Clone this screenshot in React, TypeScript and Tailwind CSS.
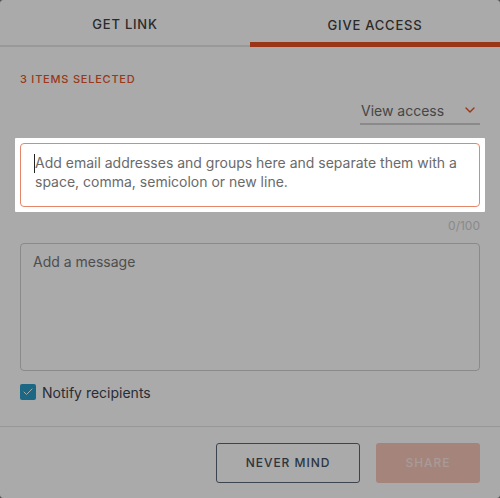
import { Check, ChevronDown } from 'lucide-react';

export default function App() {
  return (
    <div className="h-[498px] w-[500px] overflow-hidden bg-[#555] font-['Inter',sans-serif]">
      <div className="relative flex h-full flex-col overflow-hidden rounded-[4px] bg-white">
        {/* tabs */}
        <div className="flex h-[47px] border-b-2 border-[#e6e6e6]">
          <button className="flex-1 pt-[4px] text-[13px] font-medium tracking-[0.06em] text-[#404040]">
            GET LINK
          </button>
          <button className="-mb-[2px] flex-1 border-b-[5px] border-[#e75121] pt-[9px] text-[13px] font-medium tracking-[0.06em] text-[#404040]">
            GIVE ACCESS
          </button>
        </div>

        <div className="flex flex-1 flex-col px-5">
          <div className="mt-[24px] text-[11px] font-medium tracking-[0.07em] text-[#e8542a]">3 ITEMS SELECTED</div>

          <div className="mt-[12px] flex justify-end">
            <div className="flex w-[120px] items-center justify-between border-b-2 border-[#cfcfcf] pb-[2px] pl-[1px]">
              <span className="text-[14px] text-[#6a6a6a]">View access</span>
              <ChevronDown className="mr-[2px] h-4 w-4 text-[#e75121]" strokeWidth={2} />
            </div>
          </div>

          {/* spotlight */}
          <div className="relative z-10 -mx-[5px] mt-[13px] rounded-[1px] bg-white p-[5px] shadow-[0_0_0_9999px_rgba(0,0,0,0.335)]">
            <div className="flex h-[64px] rounded-[4px] border border-[#e5866b] pl-[13px] pr-4 pt-[9px]">
              <span className="mt-[1px] h-[19px] w-px shrink-0 bg-[#222]" />
              <p className="text-[14px] leading-[19px] text-[#6a6a6a]">
                Add email addresses and groups here and separate them with a space, comma, semicolon or new line.
              </p>
            </div>
          </div>

          <div className="mt-[5px] text-right text-[12px] text-[#cfcfcf]">0/100</div>

          <div className="mt-[8px] h-[128px] rounded-[4px] border border-[#cfcfcf] px-[12px] pt-[7px] text-[14px] text-[#767676]">
            Add a message
          </div>

          <div className="mt-[11px] flex items-center gap-[6px]">
            <span className="flex h-4 w-4 items-center justify-center rounded-[2px] bg-[#2b9dc7]">
              <Check className="h-3 w-3 text-white" strokeWidth={2} />
            </span>
            <span className="text-[14px] text-[#3f4450]">Notify recipients</span>
          </div>
        </div>

        <div className="flex h-[72px] items-center justify-end gap-4 border-t border-[#e3e3e3] px-5">
          <button className="h-10 w-[144px] rounded-[3px] border border-[#5a6876] text-[12px] font-medium tracking-[0.08em] text-[#44505e]">
            NEVER MIND
          </button>
          <button className="h-10 w-[104px] rounded-[3px] bg-[#f6c6b9] text-[12px] font-medium tracking-[0.08em] text-[#fde9e3]">
            SHARE
          </button>
        </div>
      </div>
    </div>
  );
}
